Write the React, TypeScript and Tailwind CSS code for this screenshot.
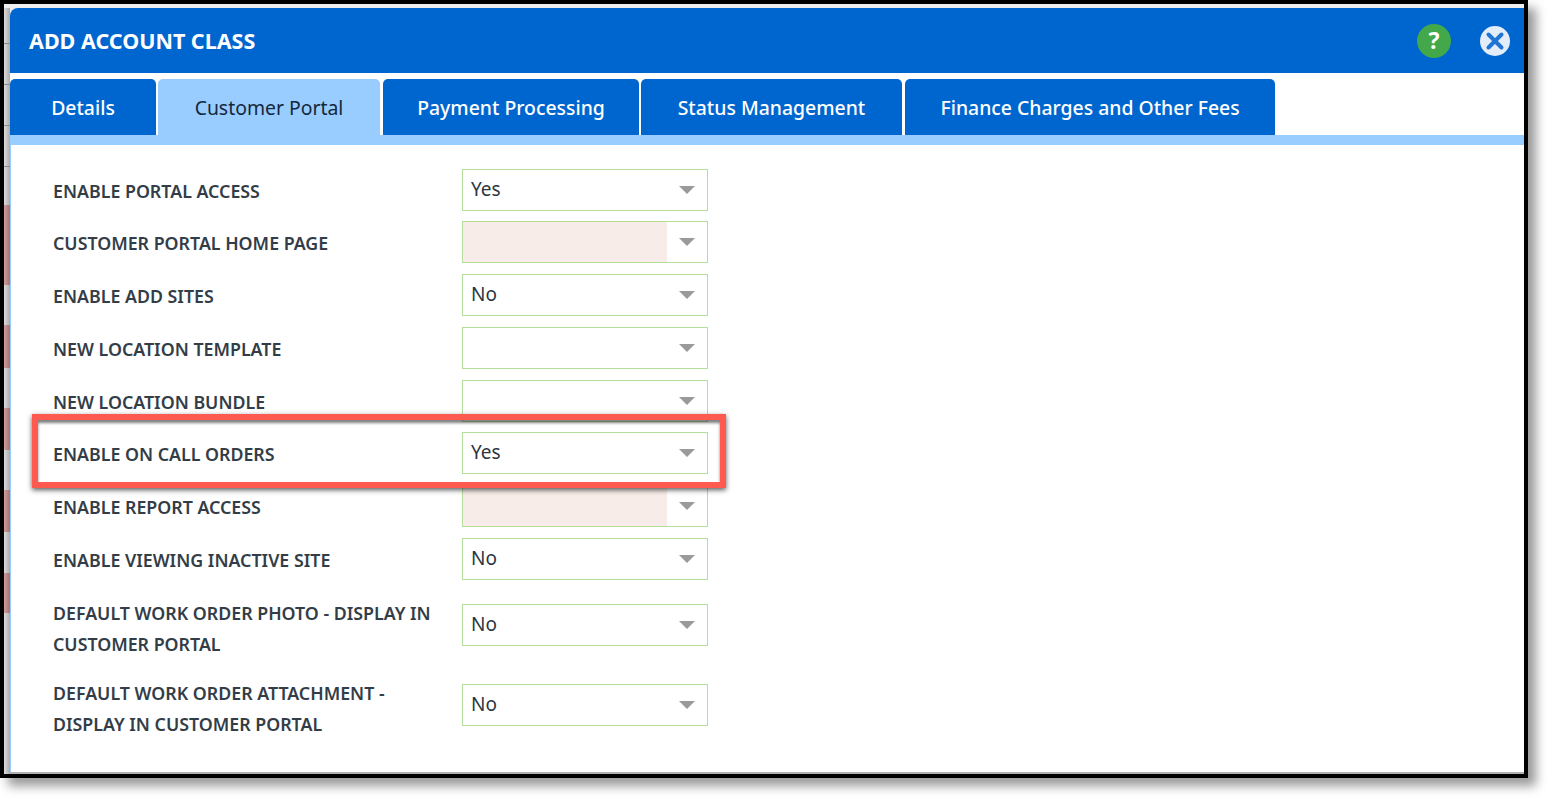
import React from "react";

const tabs = [
  { label: "Details", cls: "w-[146px]", active: false },
  { label: "Customer Portal", cls: "w-[222px] ml-[2px]", active: true },
  { label: "Payment Processing", cls: "w-[256px] ml-[3px]", active: false },
  { label: "Status Management", cls: "w-[261px] ml-[2px]", active: false },
  { label: "Finance Charges and Other Fees", cls: "w-[370px] ml-[3px]", active: false },
];

const rows = [
  { label: "ENABLE PORTAL ACCESS", value: "Yes", mt: "mt-0", pt: "pt-[2px]" },
  { label: "CUSTOMER PORTAL HOME PAGE", value: "", pink: true, mt: "mt-[10px]", pt: "pt-[2px]" },
  { label: "ENABLE ADD SITES", value: "No", mt: "mt-[11px]", pt: "pt-[2px]" },
  { label: "NEW LOCATION TEMPLATE", value: "", mt: "mt-[11px]", pt: "pt-[2px]" },
  { label: "NEW LOCATION BUNDLE", value: "", mt: "mt-[11px]", pt: "pt-[2px]" },
  { label: "ENABLE ON CALL ORDERS", value: "Yes", mt: "mt-[10px]", pt: "pt-[2px]" },
  { label: "ENABLE REPORT ACCESS", value: "", pink: true, mt: "mt-[11px]", pt: "pt-[2px]" },
  { label: "ENABLE VIEWING INACTIVE SITE", value: "No", mt: "mt-[11px]", pt: "pt-[2px]" },
  { label: "DEFAULT WORK ORDER PHOTO - DISPLAY IN CUSTOMER PORTAL", value: "No", mt: "mt-[10px]", pt: "pt-[8px]" },
  { label: "DEFAULT WORK ORDER ATTACHMENT - DISPLAY IN CUSTOMER PORTAL", value: "No", mt: "mt-[10px]", pt: "pt-[8px]" },
];

const strip = [
  { h: "h-[35px]", red: false },
  { h: "h-px", line: true },
  { h: "h-[40px]", red: false },
  { h: "h-px", line: true },
  { h: "h-[40px]", red: false },
  { h: "h-px", line: true },
  { h: "h-[40px]", red: false },
  { h: "h-px", line: true },
  { h: "h-[38px]", red: false },
  { h: "h-[80px]", red: true },
  { h: "h-[40px]", red: false },
  { h: "h-[43px]", red: true },
  { h: "h-[40px]", red: false },
  { h: "h-[42px]", red: true },
  { h: "h-[40px]", red: false },
  { h: "h-[42px]", red: true },
  { h: "h-[41px]", red: false },
  { h: "h-[40px]", red: true },
];

function Select({ value, pink }: { value: string; pink?: boolean }) {
  return (
    <div className="w-[246px] h-[42px] shrink-0 border border-[#b5dd9c] bg-white flex items-stretch">
      <div className={pink ? "w-[204px] bg-[#f7ece8]" : "w-[204px] pl-2 pt-[6px] text-[19px] leading-[26px] text-[#2c3640]"}>{value}</div>
      <div className="flex-1 flex items-center justify-end pr-[12px]">
        <svg width="16" height="8" viewBox="0 0 16 8"><path d="M0 0H16L8 8Z" fill="#9a9a9a" /></svg>
      </div>
    </div>
  );
}

export default function App() {
  return (
    <div className="w-[1548px] h-[798px] bg-white overflow-hidden" style={{ fontFamily: '"Noto Sans", "Open Sans", sans-serif' }}>
      <div className="w-[1528px] h-[778px] border-4 border-black bg-[#efefef] pt-1 flex shadow-[8px_8px_10px_rgba(0,0,0,0.4)] relative">
        <div className="w-[6px] flex flex-col bg-gradient-to-r from-[#dcdcdc] to-[#ababab]">
          {strip.map((s, i) => (
            <div
              key={i}
              className={`${s.h} ${s.red ? "bg-gradient-to-r from-[#cf9d9d] to-[#aa7272]" : ""} ${s.line ? "bg-[#8c8c8c]" : ""}`}
            />
          ))}
        </div>
        <div className="flex-1 flex flex-col bg-white rounded-tl-[8px] overflow-hidden border-b-2 border-[#b0b0b0]">
          <div className="h-[65px] bg-[#0066cf] flex items-center pl-[19px] pr-[14px]">
            <div className="flex-1 text-white text-[21.5px] font-bold pt-[2px]">ADD ACCOUNT CLASS</div>
            <svg width="34" height="34" viewBox="0 0 34 34" className="mr-[29px]">
              <circle cx="17" cy="17" r="17" fill="#43a84a" />
              <text x="17" y="25" textAnchor="middle" fill="#ffffff" fontSize="23" fontWeight="700" fontFamily="Noto Sans">?</text>
            </svg>
            <svg width="30" height="30" viewBox="0 0 30 30">
              <circle cx="15" cy="15" r="15" fill="#e3edf9" />
              <path d="M8.5 8.5L21.5 21.5M21.5 8.5L8.5 21.5" stroke="#1f74d4" strokeWidth="4" strokeLinecap="round" />
            </svg>
          </div>
          <div className="h-[6px]" />
          <div className="flex h-[56px]">
            {tabs.map((t) => (
              <div
                key={t.label}
                className={`${t.cls} rounded-t-[5px] flex items-center justify-center pt-[2px] text-[19.4px] ${t.active ? "bg-[#99ccff] text-[#14283c]" : "bg-[#0066cf] text-white font-medium"}`}
              >
                {t.label}
              </div>
            ))}
          </div>
          <div className="h-[10px] bg-[#99ccff]" />
          <div className="flex-1 border-l border-[#99ccff] pl-[42px] pt-[24px]">
            {rows.map((r) => (
              <div key={r.label} className={`flex items-center ${r.mt}`}>
                <div className={`w-[409px] pr-[20px] ${r.pt} text-[17.8px] leading-[31px] font-semibold text-[#333d47]`}>{r.label}</div>
                <Select value={r.value} pink={r.pink} />
              </div>
            ))}
          </div>
        </div>
        <div className="absolute left-[28px] top-[410px] w-[694px] h-[74px] border-[6px] border-[#ff5a4f] shadow-[0_2px_5px_rgba(0,0,0,0.65),inset_0_3px_3px_rgba(0,0,0,0.5)]" />
      </div>
    </div>
  );
}
